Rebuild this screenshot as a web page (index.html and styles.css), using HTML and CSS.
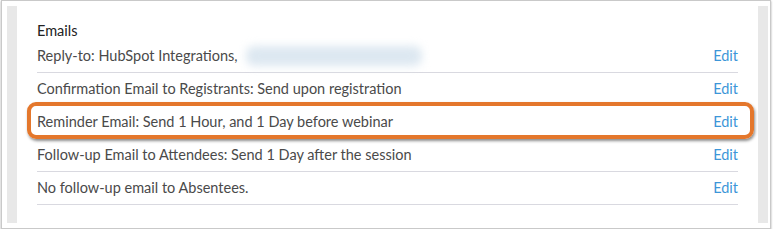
FILE: index.html
```html
<!DOCTYPE html>
<html>
<head>
<meta charset="utf-8">
<link rel="stylesheet" href="styles.css">
</head>
<body>
<div class="frame">
  <div class="panel">
    <div class="heading">Emails</div>
    <div class="row">
      <span class="label">Reply-to: HubSpot Integrations, <span class="blurred"></span></span>
      <a class="edit">Edit</a>
    </div>
    <div class="row">
      <span class="label">Confirmation Email to Registrants: Send upon registration</span>
      <a class="edit">Edit</a>
    </div>
    <div class="row highlighted">
      <span class="label">Reminder Email: Send 1 Hour, and 1 Day before webinar</span>
      <a class="edit">Edit</a>
      <div class="callout"></div>
    </div>
    <div class="row">
      <span class="label">Follow-up Email to Attendees: Send 1 Day after the session</span>
      <a class="edit">Edit</a>
    </div>
    <div class="row">
      <span class="label">No follow-up email to Absentees.</span>
      <a class="edit">Edit</a>
    </div>
  </div>
</div>
</body>
</html>
```
FILE: styles.css
```css
html, body {
  margin: 0;
  padding: 0;
  background: #ffffff;
}
body {
  font-family: Lato, "Noto Sans", sans-serif;
  font-size: 14.5px;
  color: #4a4a4a;
}
.frame {
  margin: 0 3px 0 1px;
  border: 1px solid #c9c9c9;
  box-shadow: 0 1px 2px rgba(0, 0, 0, 0.35);
  padding: 5px 2px 5px 5px;
  box-sizing: border-box;
  height: 229px;
  width: 770px;
  background: #fff;
}
.panel {
  border-left: 10px solid #e8e8e8;
  border-right: 10px solid #e8e8e8;
  padding: 16px 20px 18px 20px;
  background: #fff;
}
.heading {
  line-height: 18px;
  color: #222;
}
.row {
  display: flex;
  justify-content: space-between;
  align-items: center;
  height: 32px;
  line-height: 20px;
  border-bottom: 1px solid #d9d9e0;
  position: relative;
}
.label {
  display: flex;
  align-items: center;
  white-space: pre;
}
.blurred {
  display: inline-block;
  width: 176px;
  height: 20px;
  margin-left: 5px;
  background: #dde8f1;
  border-radius: 8px;
  filter: blur(4px);
}
.edit {
  color: #3d96d8;
  cursor: pointer;
}
.callout {
  position: absolute;
  left: -10px;
  right: -16px;
  top: -4px;
  bottom: -1px;
  border: 4px solid #e4772c;
  border-radius: 9px;
  box-shadow: 1px 2px 3px rgba(0, 0, 0, 0.45);
  pointer-events: none;
}
```
